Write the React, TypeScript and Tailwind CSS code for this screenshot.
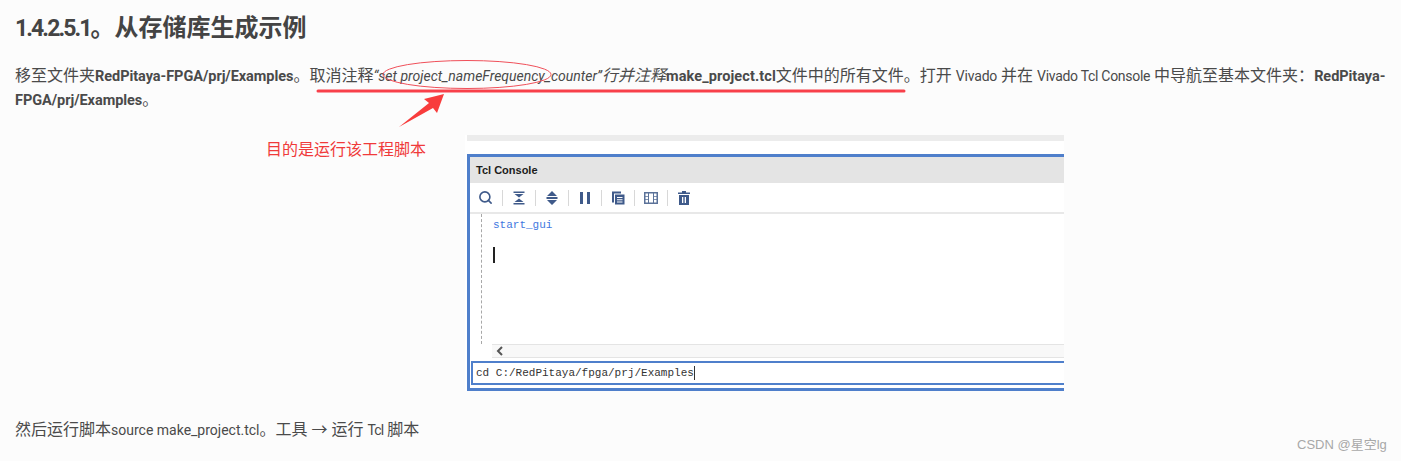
import { Search } from 'lucide-react';

const latin = { fontFamily: 'Roboto, "Noto Sans CJK SC", sans-serif' };

function Divider() {
  return <span className="w-px h-[16px] bg-[#d8d8d8] mx-[8px]" />;
}

function ToolIcon({ children }: { children: React.ReactNode }) {
  return (
    <svg width="16" height="16" viewBox="0 0 16 16" fill="#3f5a8a">
      {children}
    </svg>
  );
}

function TclConsole() {
  return (
    <div className="w-[599px] h-[256px] ml-[450px] mt-[23px] bg-white overflow-hidden flex flex-col pl-[2px] shrink-0">
      <div className="h-[6px] bg-[#ececec] shrink-0" />
      <div className="h-[13px] shrink-0" />
      <div className="flex-1 border-[3px] border-r-0 border-[#4f7fcb] flex flex-col min-h-0">
        <div className="h-[26px] bg-[#e4e4e4] flex items-center pl-[6px] text-[11px] font-bold text-[#1c1c1c] shrink-0" style={{ fontFamily: '"Liberation Sans", sans-serif' }}>
          Tcl Console
        </div>
        <div className="h-[31px] bg-white border-b-2 border-[#e8e8e8] flex items-center pl-[9px] shrink-0">
          <Search size={15} strokeWidth={2.6} color="#3f5a8a" className="-ml-[1px] mr-[1px]" />
          <Divider />
          <ToolIcon>
            <path d="M2.500 1.500h11v1.600h-11zM3.500 4h9L8 7.500zM3.500 12L8 8.500l4.500 3.500zM2.500 12.900h11v1.600h-11z" />
          </ToolIcon>
          <Divider />
          <ToolIcon>
            <path d="M8 1l5 5H3zM2.500 7h11v2h-11zM3 10h10l-5 5z" />
          </ToolIcon>
          <Divider />
          <ToolIcon>
            <path d="M3 2h3v12H3zM10 2h3v12h-3z" />
          </ToolIcon>
          <Divider />
          <ToolIcon>
            <path d="M2 1.500h9v2H4v9H2z" />
            <path d="M5 4.500h9.500v10H5zM7 7v1h5.500V7zM7 9.300v1h5.500v-1zM7 11.500v1h5.500v-1z" fillRule="evenodd" />
          </ToolIcon>
          <Divider />
          <svg width="16" height="16" viewBox="0 0 16 16" fill="#5b7299">
            <path d="M1 2h14v12H1zM5 3.500H2.500v2.500H5zM5 6.800H2.500v2.500H5zM5 10H2.500v2.500H5zM13.500 3.500H11v2.500h2.500zM13.500 6.800H11v2.500h2.500zM13.500 10H11v2.500h2.500zM6 3.500v9h4v-9z" fillRule="evenodd" />
          </svg>
          <Divider />
          <ToolIcon>
            <path d="M6 1h4v1.500h4V4H2V2.500h4zM3 5h10v10H3zM6 7v6h1.300V7zM8.700 7v6H10V7z" fillRule="evenodd" />
          </ToolIcon>
        </div>
        <div className="flex-1 flex min-h-0 pl-[11px]">
          <div className="w-0 h-[130px] border-l border-dashed border-[#a8a8a8] shrink-0" />
          <div className="flex-1 pl-[11px] pt-[4px] flex flex-col">
            <span className="text-[11px] leading-[14px] text-[#3f78e0]" style={{ fontFamily: '"Liberation Mono", monospace' }}>start_gui</span>
            <span className="w-[2px] h-[16px] bg-[#222] mt-[15px]" />
          </div>
        </div>
        <div className="h-[14px] ml-[22px] bg-[#f8f8f8] border-y border-[#e4e4e4] flex items-center pl-[4px] shrink-0">
          <svg width="8" height="10" viewBox="0 0 8 10" fill="none" stroke="#555" strokeWidth="2">
            <path d="M6 1L2 5l4 4" />
          </svg>
        </div>
        <div className="h-[24px] mt-[3px] mb-[3px] ml-[1px] border-2 border-r-0 border-[#4f7fcb] flex items-center pl-[3px] shrink-0">
          <span className="text-[11px] text-[#333]" style={{ fontFamily: '"Liberation Mono", monospace' }}>cd C:/RedPitaya/fpga/prj/Examples</span>
          <span className="w-px h-[14px] bg-[#333]" />
        </div>
      </div>
    </div>
  );
}

export default function App() {
  return (
    <div className="relative w-[1401px] h-[461px] bg-[#fcfcfc] overflow-hidden px-[15px] pt-[14px] text-[#4a4a4a] flex flex-col" style={latin}>
      <h1 className="text-[24px] leading-[28px] font-bold text-[#444]">
        <span className="text-[23px] tracking-[-1.9px]">1.4.2.5.1</span>。从存储库生成示例
      </h1>
      <p className="mt-[21px] text-[16px] leading-[24px] w-[1372px]">
        移至文件夹<b className="text-[14.5px] leading-none tracking-[-0.05px]">RedPitaya-FPGA/prj/Examples</b>。取消注释<i className="text-[14px] leading-none">“set project_nameFrequency_counter”<span className="text-[16px] leading-none">行并注释</span></i><b className="text-[14.5px] leading-none tracking-[0.1px]">make_project.tcl</b>文件中的所有文件。打开 <span className="text-[14px] leading-none tracking-[-0.2px]">Vivado</span> 并在 <span className="text-[14px] leading-none tracking-[-0.3px]">Vivado Tcl Console</span> 中导航至基本文件夹：<b className="text-[14.5px] leading-none tracking-[-0.05px]">RedPitaya-FPGA/prj/Examples</b>。
      </p>
      <TclConsole />
      <p className="mt-[27px] text-[16px] leading-[24px]">
        然后运行脚本<span className="text-[14px] leading-none">source make_project.tcl</span>。工具 → 运行 <span className="text-[14px] leading-none tracking-[-0.9px]">Tcl</span> 脚本
      </p>

      {/* red annotations drawn over the page */}
      <svg className="absolute left-0 top-0 pointer-events-none" width="1401" height="461" fill="none">
        <ellipse cx="467" cy="74.500" rx="84" ry="14" stroke="#f0505a" strokeWidth="1" />
        <path d="M318 91Q610 92 904 91" stroke="#f8404a" strokeWidth="3" strokeLinecap="round" />
        <path d="M399 127L429 103 424 99 444 94 437 113 433 108z" fill="#f83c3c" />
      </svg>
      <span className="absolute left-[266px] top-[140px] text-[16px] leading-[20px] text-[#f03a3a]">目的是运行该工程脚本</span>
      <span className="absolute left-[1297px] top-[436px] text-[13px] leading-[18px] text-[#a8a8a8]" style={{ fontFamily: '"Liberation Sans", "Noto Sans CJK SC", sans-serif' }}>CSDN @星空lg</span>
    </div>
  );
}
